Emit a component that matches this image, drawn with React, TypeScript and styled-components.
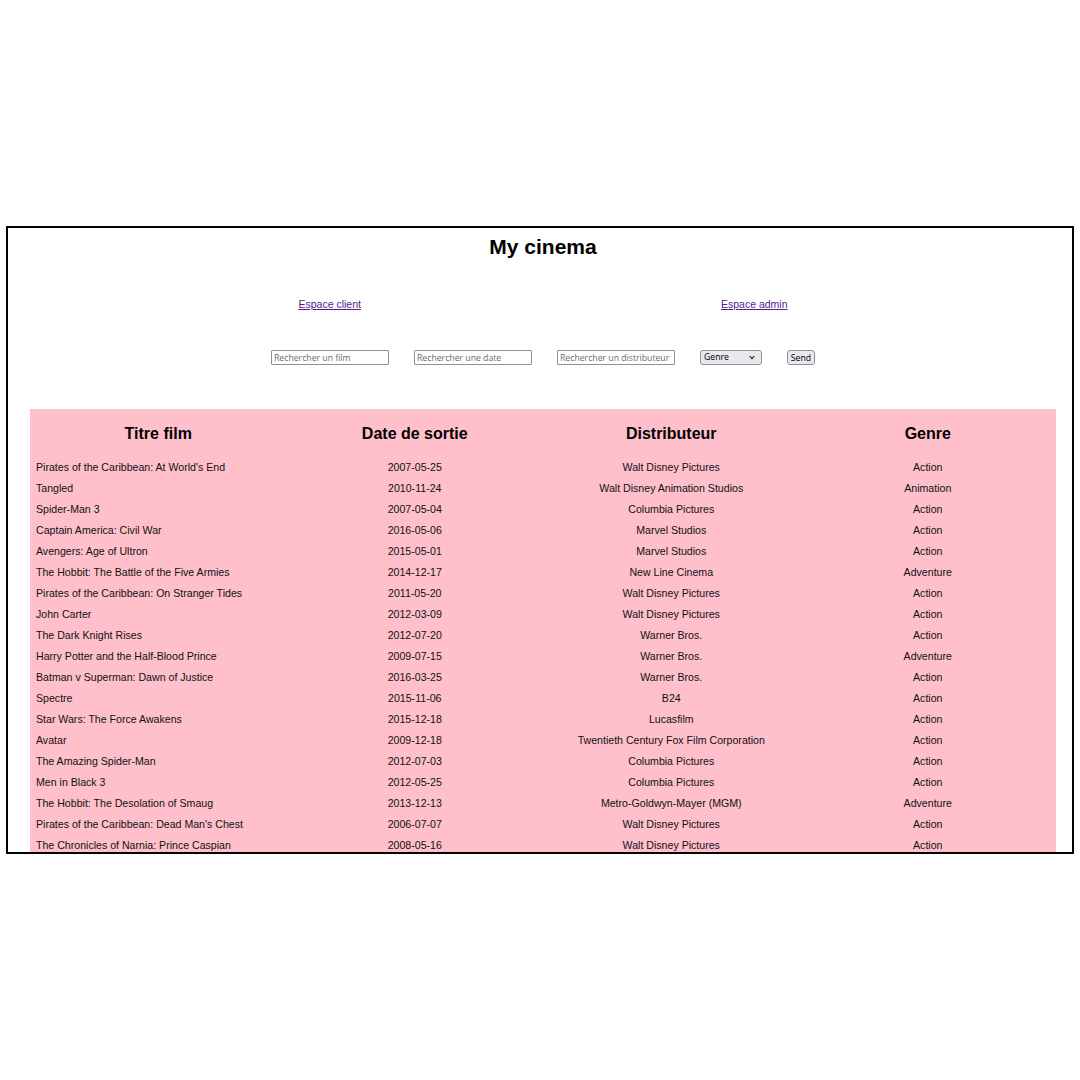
import React from "react";
import styled, { createGlobalStyle } from "styled-components";

const Global = createGlobalStyle`
  html, body { margin: 0; padding: 0; background: #fff; }
  body { font-family: "Liberation Sans", Arial, sans-serif; }
`;

const Page = styled.div`
  width: 1080px;
  height: 1080px;
  padding: 226px 0 0 6px;
  box-sizing: border-box;
`;

const Frame = styled.div`
  width: 1068px;
  height: 628px;
  border: 2px solid #000;
  box-sizing: border-box;
  overflow: hidden;
  display: flex;
  flex-direction: column;
  align-items: stretch;
`;

const Title = styled.h1`
  margin: 6px 0 0 0;
  font-size: 21px;
  line-height: 26px;
  font-weight: bold;
  text-align: center;
  color: #000;
  padding-left: 6px;
`;

const Links = styled.nav`
  margin-top: 37px;
  display: flex;
  justify-content: center;
  gap: 360px;
  padding-left: 6px;
`;

const NavLink = styled.a`
  font-size: 10.5px;
  line-height: 14px;
  color: #551a8b;
  text-decoration: underline;
`;

const SearchForm = styled.form`
  margin-top: 39px;
  display: flex;
  justify-content: center;
  align-items: center;
  gap: 25px;
  padding-left: 6px;
  height: 15px;
`;

const SearchInput = styled.input`
  width: 118px;
  height: 15px;
  box-sizing: border-box;
  border: 1px solid #8f8f9d;
  border-radius: 1px;
  padding: 0 2px;
  font-family: "Open Sans", "DejaVu Sans", sans-serif;
  font-size: 8.7px;
  background: #fff;
  &::placeholder { color: #6b6b6b; }
`;

const SelectWrap = styled.div`
  position: relative;
  width: 62px;
  height: 15px;
`;

const GenreSelect = styled.select`
  appearance: none;
  -webkit-appearance: none;
  width: 62px;
  height: 15px;
  box-sizing: border-box;
  border: 1px solid #8f8f9d;
  border-radius: 3px;
  background: #e9e9ed;
  font-family: "Open Sans", "DejaVu Sans", sans-serif;
  font-size: 8.7px;
  line-height: 13px;
  padding: 0 0 0 3px;
  color: #000;
  display: block;
`;

const Chevron = styled.svg`
  position: absolute;
  right: 7px;
  top: 5px;
  width: 6px;
  height: 5px;
  pointer-events: none;
`;

const SendButton = styled.button`
  width: 28px;
  height: 15px;
  box-sizing: border-box;
  border: 1px solid #8f8f9d;
  border-radius: 3px;
  background: #e9e9ed;
  font-family: "Open Sans", "DejaVu Sans", sans-serif;
  font-size: 8.7px;
  padding: 0;
  color: #000;
`;

const Table = styled.table`
  margin: 44px 0 0 22px;
  width: 1026px;
  table-layout: fixed;
  border-collapse: collapse;
  background: #ffc0cb;
  flex-shrink: 0;
`;

const HeadCell = styled.th`
  font-size: 16px;
  line-height: 20px;
  font-weight: bold;
  padding: 15px 0 13px;
  text-align: center;
  color: #000;
`;

const Cell = styled.td<{ $left?: boolean }>`
  font-size: 10.6px;
  line-height: 21px;
  height: 21px;
  padding: 0 0 0 ${(p) => (p.$left ? "6px" : "0")};
  text-align: ${(p) => (p.$left ? "left" : "center")};
  color: #111;
  white-space: nowrap;
`;

const films: [string, string, string, string][] = [
  ["Pirates of the Caribbean: At World's End", "2007-05-25", "Walt Disney Pictures", "Action"],
  ["Tangled", "2010-11-24", "Walt Disney Animation Studios", "Animation"],
  ["Spider-Man 3", "2007-05-04", "Columbia Pictures", "Action"],
  ["Captain America: Civil War", "2016-05-06", "Marvel Studios", "Action"],
  ["Avengers: Age of Ultron", "2015-05-01", "Marvel Studios", "Action"],
  ["The Hobbit: The Battle of the Five Armies", "2014-12-17", "New Line Cinema", "Adventure"],
  ["Pirates of the Caribbean: On Stranger Tides", "2011-05-20", "Walt Disney Pictures", "Action"],
  ["John Carter", "2012-03-09", "Walt Disney Pictures", "Action"],
  ["The Dark Knight Rises", "2012-07-20", "Warner Bros.", "Action"],
  ["Harry Potter and the Half-Blood Prince", "2009-07-15", "Warner Bros.", "Adventure"],
  ["Batman v Superman: Dawn of Justice", "2016-03-25", "Warner Bros.", "Action"],
  ["Spectre", "2015-11-06", "B24", "Action"],
  ["Star Wars: The Force Awakens", "2015-12-18", "Lucasfilm", "Action"],
  ["Avatar", "2009-12-18", "Twentieth Century Fox Film Corporation", "Action"],
  ["The Amazing Spider-Man", "2012-07-03", "Columbia Pictures", "Action"],
  ["Men in Black 3", "2012-05-25", "Columbia Pictures", "Action"],
  ["The Hobbit: The Desolation of Smaug", "2013-12-13", "Metro-Goldwyn-Mayer (MGM)", "Adventure"],
  ["Pirates of the Caribbean: Dead Man's Chest", "2006-07-07", "Walt Disney Pictures", "Action"],
  ["The Chronicles of Narnia: Prince Caspian", "2008-05-16", "Walt Disney Pictures", "Action"],
  ["The Avengers", "2012-04-25", "Marvel Studios", "Action"],
  ["Superman Returns", "2006-06-28", "Warner Bros.", "Adventure"],
  ["Quantum of Solace", "2008-10-30", "Columbia Pictures", "Action"],
];

export default function App() {
  return (
    <Page>
      <Global />
      <Frame>
        <Title>My cinema</Title>
        <Links>
          <NavLink href="#client">Espace client</NavLink>
          <NavLink href="#admin">Espace admin</NavLink>
        </Links>
        <SearchForm onSubmit={(e) => e.preventDefault()}>
          <SearchInput placeholder="Rechercher un film" />
          <SearchInput placeholder="Rechercher une date" />
          <SearchInput placeholder="Rechercher un distributeur" />
          <SelectWrap>
            <GenreSelect defaultValue="">
              <option value="">Genre</option>
              <option value="action">Action</option>
              <option value="adventure">Adventure</option>
              <option value="animation">Animation</option>
            </GenreSelect>
            <Chevron viewBox="0 0 6 5">
              <path d="M0.8 1.2 L3 3.6 L5.2 1.2" fill="none" stroke="#222" strokeWidth="1.1" />
            </Chevron>
          </SelectWrap>
          <SendButton type="submit">Send</SendButton>
        </SearchForm>
        <Table>
          <thead>
            <tr>
              <HeadCell>Titre film</HeadCell>
              <HeadCell>Date de sortie</HeadCell>
              <HeadCell>Distributeur</HeadCell>
              <HeadCell>Genre</HeadCell>
            </tr>
          </thead>
          <tbody>
            {films.map((f) => (
              <tr key={f[0]}>
                <Cell $left>{f[0]}</Cell>
                <Cell>{f[1]}</Cell>
                <Cell>{f[2]}</Cell>
                <Cell>{f[3]}</Cell>
              </tr>
            ))}
          </tbody>
        </Table>
      </Frame>
    </Page>
  );
}
